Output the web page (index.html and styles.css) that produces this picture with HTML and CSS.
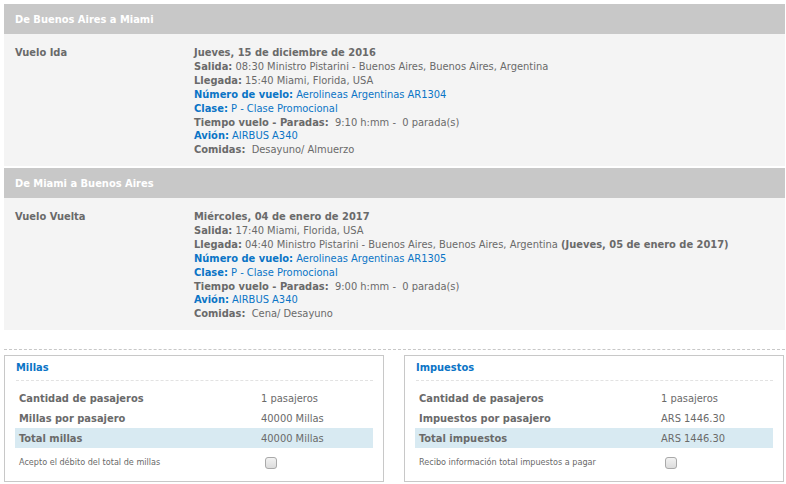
FILE: index.html
```html
<!DOCTYPE html>
<html lang="es">

<head>
  <meta charset="UTF-8" />
  <meta name="viewport" content="width=device-width, initial-scale=1.0" />
  <title>Resumen del viaje</title>
  <link rel="stylesheet" href="styles.css">
</head>

<body>
  <!-- Tramo de ida -->
  <div class="leg">
    <div class="leg-head">De Buenos Aires a Miami</div>
    <div class="leg-body">
      <div class="leg-label">Vuelo Ida</div>
      <div class="leg-info">
        <div class="date">Jueves, 15 de diciembre de 2016</div>
        <div><b>Salida:</b> 08:30 Ministro Pistarini - Buenos Aires, Buenos Aires, Argentina</div>
        <div><b>Llegada:</b> 15:40 Miami, Florida, USA</div>
        <div class="blue"><b>Número de vuelo:</b> Aerolineas Argentinas AR1304</div>
        <div class="blue"><b>Clase:</b> P - Clase Promocional</div>
        <div><b>Tiempo vuelo - Paradas:</b>&nbsp; 9:10 h:mm -&nbsp; 0 parada(s)</div>
        <div class="blue"><b>Avión:</b> AIRBUS A340</div>
        <div><b>Comidas:</b>&nbsp; Desayuno/ Almuerzo</div>
      </div>
    </div>
  </div>

  <!-- Tramo de vuelta -->
  <div class="leg">
    <div class="leg-head">De Miami a Buenos Aires</div>
    <div class="leg-body">
      <div class="leg-label">Vuelo Vuelta</div>
      <div class="leg-info">
        <div class="date">Miércoles, 04 de enero de 2017</div>
        <div><b>Salida:</b> 17:40 Miami, Florida, USA</div>
        <div><b>Llegada:</b> 04:40 Ministro Pistarini - Buenos Aires, Buenos Aires, Argentina <span class="date">(Jueves, 05 de enero de 2017)</span></div>
        <div class="blue"><b>Número de vuelo:</b> Aerolineas Argentinas AR1305</div>
        <div class="blue"><b>Clase:</b> P - Clase Promocional</div>
        <div><b>Tiempo vuelo - Paradas:</b>&nbsp; 9:00 h:mm -&nbsp; 0 parada(s)</div>
        <div class="blue"><b>Avión:</b> AIRBUS A340</div>
        <div><b>Comidas:</b>&nbsp; Cena/ Desayuno</div>
      </div>
    </div>
  </div>

  <!-- Resumen de millas e impuestos -->
  <div class="summary">
    <div class="box">
      <div class="box-title">Millas</div>
      <table class="box-table">
        <tr>
          <th>Cantidad de pasajeros</th>
          <td>1 pasajeros</td>
        </tr>
        <tr>
          <th>Millas por pasajero</th>
          <td>40000 Millas</td>
        </tr>
        <tr class="total">
          <th>Total millas</th>
          <td>40000 Millas</td>
        </tr>
        <tr class="check-row">
          <th>Acepto el débito del total de millas</th>
          <td><span class="check"></span></td>
        </tr>
      </table>
    </div>

    <div class="box">
      <div class="box-title">Impuestos</div>
      <table class="box-table">
        <tr>
          <th>Cantidad de pasajeros</th>
          <td>1 pasajeros</td>
        </tr>
        <tr>
          <th>Impuestos por pasajero</th>
          <td>ARS 1446.30</td>
        </tr>
        <tr class="total">
          <th>Total impuestos</th>
          <td>ARS 1446.30</td>
        </tr>
        <tr class="check-row">
          <th>Recibo información total impuestos a pagar</th>
          <td><span class="check"></span></td>
        </tr>
      </table>
    </div>
  </div>
</body>

</html>
```

FILE: styles.css
```css
body {
  margin: 0;
  padding: 4px 1px 0 4px;
  background: #fff;
  font-family: "DejaVu Sans Condensed", "DejaVu Sans", sans-serif;
  font-size: 11px;
  color: #6a6a6a;
}

/* Tramos del viaje */
.leg {
  margin-bottom: 2px;
}

.leg-head {
  height: 30px;
  line-height: 31px;
  padding-left: 11px;
  background-color: #c8c8c8;
  color: #fff;
  font-weight: bold;
}

.leg-body {
  display: flex;
  height: 132px;
  box-sizing: border-box;
  padding: 12px 0 0 11px;
  background-color: #f4f4f4;
}

.leg-label {
  width: 179px;
  flex-shrink: 0;
  font-weight: bold;
  line-height: 14px;
}

.leg-info {
  line-height: 13.9px;
}

.date {
  font-weight: bold;
}

.blue {
  color: #0b74c6;
}

/* Bloques de resumen */
.summary {
  display: flex;
  gap: 20px;
  margin-top: 19px;
  padding-top: 5px;
  border-top: 1px dashed #c8c8c8;
}

.box {
  width: 380px;
  height: 127px;
  box-sizing: border-box;
  padding: 5px 10px 0 10px;
  border: 1px solid #c8c8c8;
}

.box-title {
  margin-left: 1px;
  height: 19px;
  line-height: 14px;
  border-bottom: 1px dashed #e2e2e2;
  color: #0b74c6;
  font-weight: bold;
}

.box-table {
  width: 358px;
  margin-top: 7px;
  border-collapse: collapse;
}

.box-table th,
.box-table td {
  height: 20px;
  padding: 0 4px;
  text-align: left;
  white-space: nowrap;
}

.box-table th {
  width: 234px;
  font-weight: bold;
}

.total th,
.total td {
  background-color: #d8eaf2;
}

.check-row th {
  height: 28px;
  font-weight: normal;
  font-size: 9px;
}

.check {
  display: inline-block;
  width: 10px;
  height: 10px;
  margin: 2px 0 0 4px;
  border: 1px solid #a9a9a9;
  border-radius: 3px;
  background: linear-gradient(#f2f2f2, #dcdcdc);
  vertical-align: middle;
}
```
